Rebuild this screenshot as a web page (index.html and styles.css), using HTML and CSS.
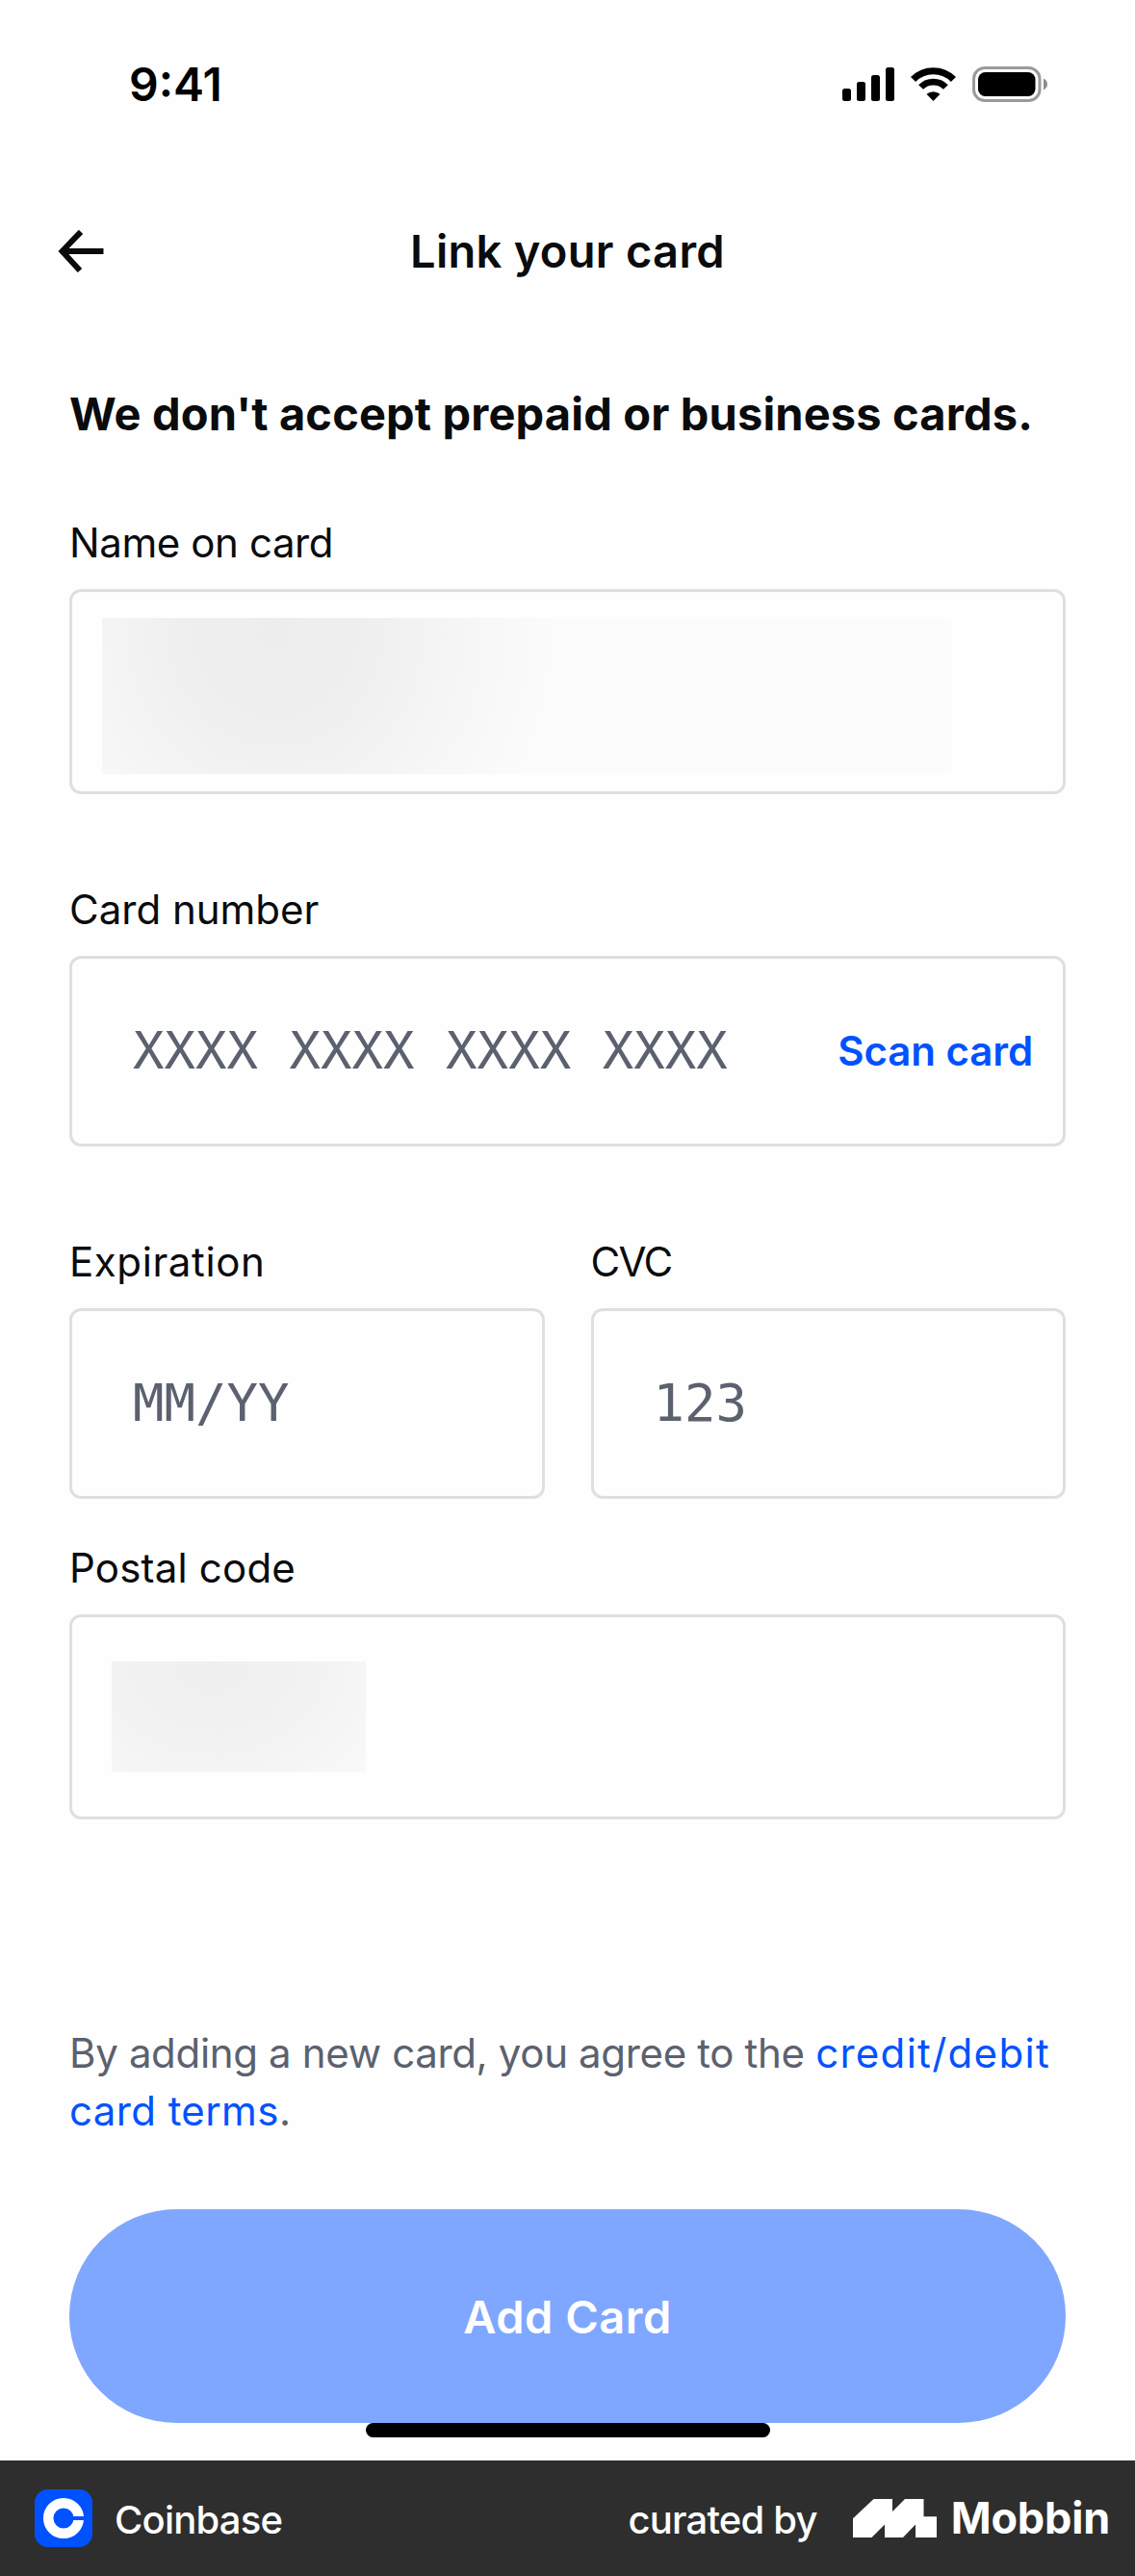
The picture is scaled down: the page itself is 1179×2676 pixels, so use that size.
FILE: index.html
```html
<!DOCTYPE html>
<html lang="en">
<head>
<meta charset="utf-8">
<title>Link your card</title>
<link rel="stylesheet" href="styles.css">
</head>
<body>
<div class="status-bar">
  <span class="time">9:41</span>
  <svg class="status-icons" viewBox="870 64 220 48" width="220" height="48">
    <rect x="875" y="92" width="9" height="13" rx="2.5"/>
    <rect x="890" y="85" width="9" height="20" rx="2.5"/>
    <rect x="905" y="78" width="9" height="27" rx="2.5"/>
    <rect x="920" y="70" width="9" height="35" rx="2.5"/>
    <path d="M948.6 82.5A29.3 29.3 0 0 1 990.4 82.5" fill="none" stroke="#000" stroke-width="7.2"/>
    <path d="M956.6 90.5A18 18 0 0 1 982.4 90.5" fill="none" stroke="#000" stroke-width="6.8"/>
    <path d="M969.5 105L962.5 97.8A10.5 10.5 0 0 1 976.5 97.8Z"/>
    <rect x="1011.5" y="70.5" width="68.5" height="34" rx="11.5" fill="none" stroke="#9a9a9a" stroke-width="3"/>
    <rect x="1016" y="75" width="59.5" height="25" rx="7.5"/>
    <path d="M1084 81.5C1089.3 84 1089.3 91 1084 93.500Z" fill="#8c8c8c"/>
  </svg>
</div>

<header class="nav">
  <svg class="back" viewBox="0 0 48 44" width="48" height="44">
    <path d="M24 1.800L4.600 22L23 42M4.600 22H47.500" fill="none" stroke="#0a0b0d" stroke-width="6"/>
  </svg>
  <h1 class="title">Link your card</h1>
</header>

<main class="content">
  <h2 class="notice">We don't accept prepaid or business cards.</h2>

  <div class="field">
    <span class="label label-name">Name on card</span>
    <div class="input input-tall input-name"><div class="redacted-name"></div></div>
  </div>

  <div class="field">
    <span class="label label-number">Card number</span>
    <div class="input input-number">
      <span class="placeholder">XXXX XXXX XXXX XXXX</span>
      <span class="scan">Scan card</span>
    </div>
  </div>

  <div class="row">
    <div class="field">
      <span class="label label-exp">Expiration</span>
      <div class="input"><span class="placeholder">MM/YY</span></div>
    </div>
    <div class="field">
      <span class="label label-cvc">CVC</span>
      <div class="input input-cvc"><span class="placeholder">123</span></div>
    </div>
  </div>

  <div class="field field-postal">
    <span class="label label-postal">Postal code</span>
    <div class="input input-tall input-postal"><div class="redacted-postal"></div></div>
  </div>

  <p class="terms">By adding a new card, you agree to the <span class="link link-first">credit/debit</span><br><span class="link link-second">card terms</span>.</p>

  <div class="button">Add Card</div>
</main>
<div class="home-indicator"></div>

<footer class="footer">
  <svg class="app-icon" viewBox="0 0 60 60" width="60" height="60">
    <rect width="60" height="60" rx="14" fill="#0052ff"/>
    <circle cx="30" cy="30" r="15.800" fill="none" stroke="#fff" stroke-width="10.500"/>
    <rect x="38" y="28" width="14" height="4" fill="#0052ff"/>
  </svg>
  <span class="app-name">Coinbase</span>
  <span class="curated">curated by</span>
  <svg class="brand-mark" viewBox="0 0 87 40" width="87" height="40">
    <path d="M0 20.300L21.500 0H41V13L54 0H73.500V18.300H87V40H65V26.500L52 40H33V26.500L19.500 40H0Z" fill="#fff"/>
  </svg>
  <span class="brand">Mobbin</span>
</footer>
</body>
</html>
```
FILE: styles.css
```css
* { box-sizing: border-box; }

body {
  margin: 0;
  width: 1179px;
  height: 2676px;
  display: flex;
  flex-direction: column;
  background: #fefefe;
  color: #0a0b0d;
  font-family: Inter, "Liberation Sans", sans-serif;
  font-size: 42px;
  line-height: 60px;
}

h1, h2, p { margin: 0; }

.status-bar {
  height: 176px;
  padding: 0 89px 0 134px;
  display: flex;
  align-items: center;
  justify-content: space-between;
}

.time {
  color: #000;
  font-size: 48px;
  font-weight: 600;
}

.nav {
  height: 170px;
  padding: 0 60px;
  display: grid;
  grid-template-columns: 48px 1fr 48px;
  align-items: center;
}

.title {
  font-size: 47px;
  font-weight: 600;
  letter-spacing: 0.3px;
  text-align: center;
}

.content {
  padding: 54px 72px 0;
  display: flex;
  flex-direction: column;
}

.notice {
  margin-bottom: 74px;
  font-size: 47px;
  font-weight: 700;
  letter-spacing: 0.15px;
  white-space: nowrap;
}

.field {
  margin-bottom: 90px;
  display: flex;
  flex-direction: column;
  gap: 18px;
}

.label-name { letter-spacing: -0.4px; }
.label-number { letter-spacing: 0; }
.label-exp { letter-spacing: 0.6px; }
.label-cvc { letter-spacing: -1.6px; }
.label-postal { letter-spacing: 0.2px; }

.input {
  height: 198px;
  padding: 0 31px 0 63px;
  display: flex;
  align-items: center;
  justify-content: space-between;
  border: 3px solid #dfdfe0;
  border-radius: 12px;
}

.input-tall { height: 213px; }
.input-name { padding: 8px 31px 0; }
.input-postal { padding: 0 41px 1px; }
.input-cvc { padding-left: 62px; }

.placeholder {
  color: #5b616e;
  font: 54px/60px "DejaVu Sans Mono", monospace;
  white-space: pre;
}

.scan {
  color: #0052ff;
  font-weight: 600;
  letter-spacing: -0.1px;
}

.redacted-name {
  width: 882px;
  height: 162px;
  background: radial-gradient(ellipse 300px 330px at 180px 10px, #ededed 0%, #efefef 32%, #f7f7f7 72%, #fcfcfc 100%);
}

.redacted-postal {
  width: 264px;
  height: 115px;
  background: radial-gradient(ellipse 230px 190px at 105px 0, #efefef 0%, #f2f2f2 45%, #fafafa 100%);
}

.row {
  display: grid;
  grid-template-columns: 1fr 1fr;
  gap: 48px;
}

.row .field { margin-bottom: 42px; }
.field-postal { margin-bottom: 0; }

.terms {
  margin: 213px -20px 72px 0;
  color: #5b616e;
  letter-spacing: -0.34px;
}

.link { color: #0052ff; }
.link-first { letter-spacing: 1.3px; }
.link-second { letter-spacing: 0.4px; }

.button {
  height: 222px;
  padding-top: 1px;
  display: flex;
  align-items: center;
  justify-content: center;
  border-radius: 111px;
  background: #80a7ff;
  color: #fefefe;
  font-size: 47px;
  font-weight: 600;
  letter-spacing: 0.5px;
}

.home-indicator {
  width: 420px;
  height: 15px;
  margin: 0 auto;
  border-radius: 7.5px;
  background: #000;
}

.footer {
  height: 120px;
  margin-top: auto;
  padding: 0 26px 0 36px;
  display: flex;
  align-items: center;
  background: #2e2e2e;
  color: #fff;
  font-size: 40px;
  font-weight: 500;
  letter-spacing: -0.8px;
}

.app-name {
  margin-left: 23px;
  padding-top: 3px;
}

.curated {
  margin-left: auto;
  padding-top: 3px;
}

.brand-mark { margin: 0 15px 0 37px; }

.brand {
  font-size: 45px;
  font-weight: 700;
  letter-spacing: -0.2px;
}
```
